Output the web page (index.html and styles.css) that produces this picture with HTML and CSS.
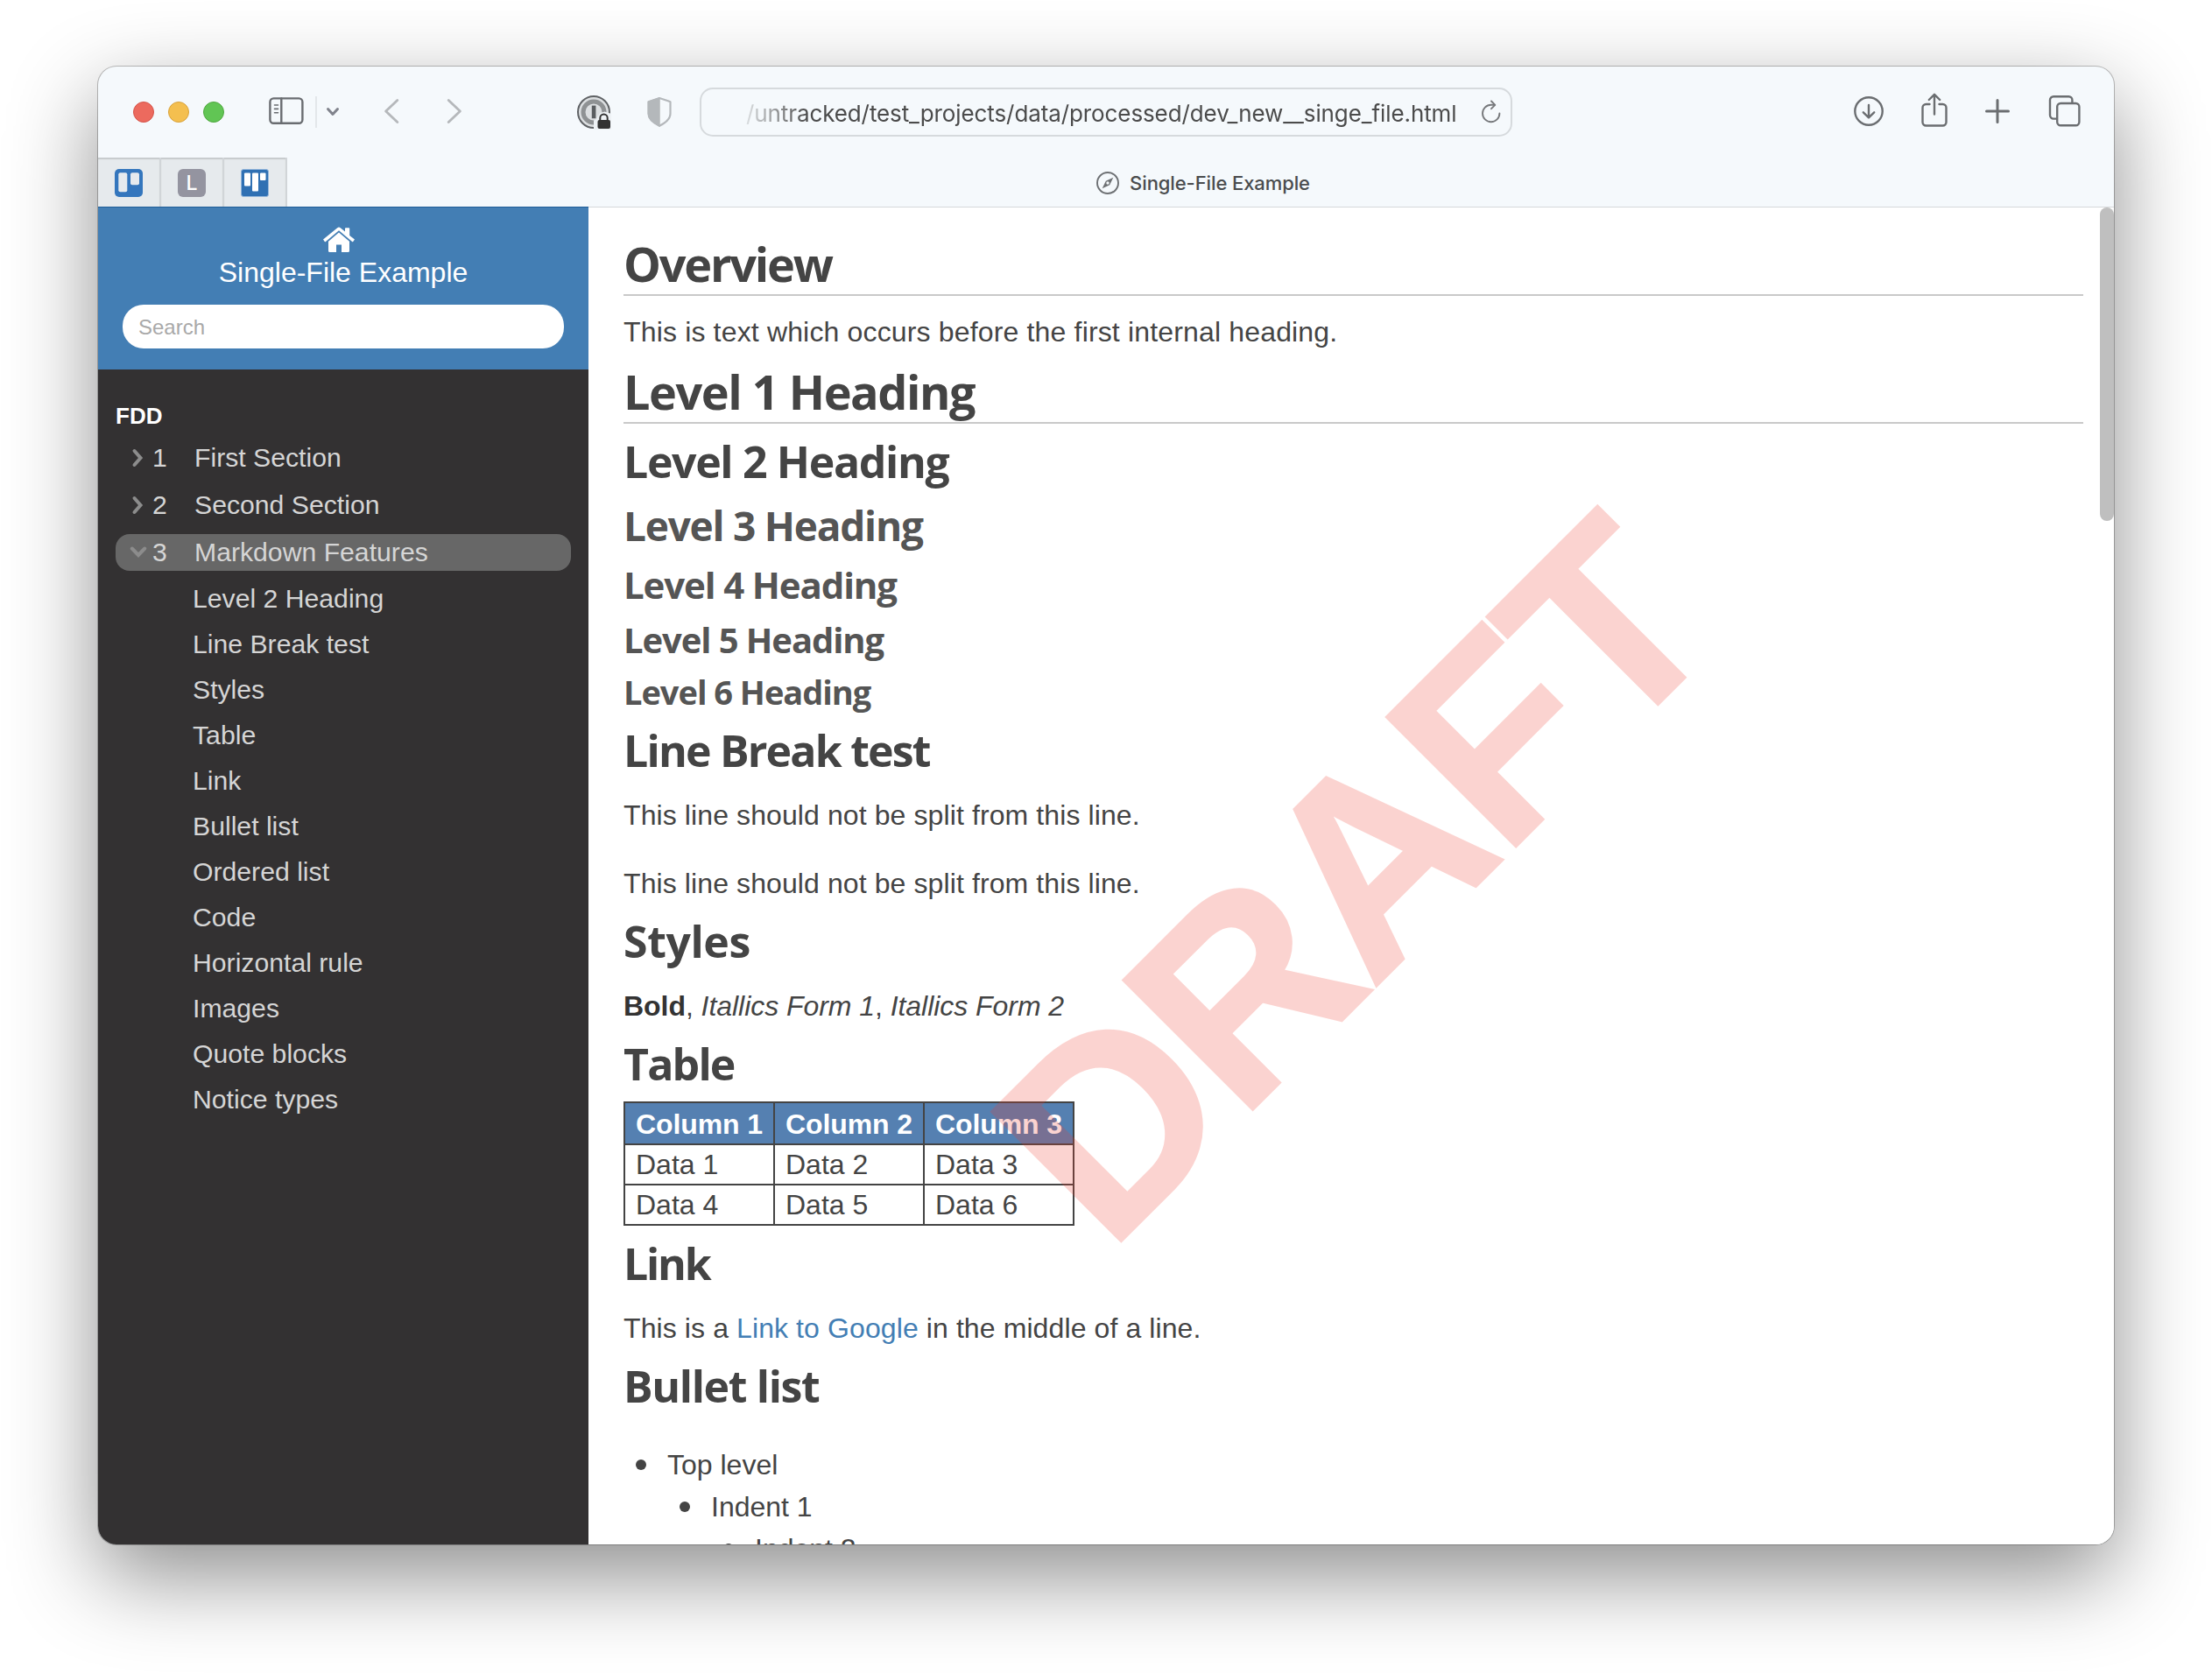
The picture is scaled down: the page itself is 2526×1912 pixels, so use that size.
FILE: index.html
```html
<!DOCTYPE html>
<html lang="en">
<head>
<meta charset="utf-8">
<title>Single-File Example</title>
<link rel="stylesheet" href="styles.css">
</head>
<body>
<div class="window">
  <header class="toolbar">
    <div class="lights"><span class="light red"></span><span class="light yellow"></span><span class="light green"></span></div>
    <svg class="i-sidebar" width="40" height="32" viewBox="0 0 40 32" fill="none" stroke="#696c70" stroke-width="2.4" stroke-linecap="round"><rect x="1.4" y="1.4" width="37" height="28.4" rx="4"/><path d="M14.3 1.5v28"/><path d="M6.5 9h4M6.5 13.4h4M6.5 17.8h4" stroke-width="1.6"/></svg>
    <span class="divider"></span>
    <svg class="i-chev" width="16" height="12" viewBox="0 0 16 12" fill="none" stroke="#80838c" stroke-width="3" stroke-linecap="round" stroke-linejoin="round"><path d="M2.5 2.5L8 8.5L13.5 2.5"/></svg>
    <svg class="i-back" width="18" height="30" viewBox="0 0 18 30" fill="none" stroke="#b5b8bb" stroke-width="2.8" stroke-linecap="round" stroke-linejoin="round"><path d="M15.8 2.4L2.6 15L15.8 27.6"/></svg>
    <svg class="i-fwd" width="18" height="30" viewBox="0 0 18 30" fill="none" stroke="#b5b8bb" stroke-width="2.8" stroke-linecap="round" stroke-linejoin="round"><path d="M2.2 2.4L15.4 15L2.2 27.6"/></svg>
    <svg class="i-pass" width="40" height="40" viewBox="0 0 40 40"><circle cx="20" cy="20" r="18" fill="#dcdfe1" stroke="#5f6265" stroke-width="2"/><circle cx="20" cy="20" r="12" fill="#dcdfe1" stroke="#8f9294" stroke-width="5"/><rect x="17.8" y="12.6" width="4.6" height="14.6" fill="#5a5d60"/><path d="M20 40V29.500q4-1 4.500-4.500l3-4 5-1.500L40 22v18z" fill="#eef2f5"/><path d="M27.3 30v-3.2a4.2 4.2 0 0 1 8.4 0V30" fill="none" stroke="#333" stroke-width="2"/><rect x="24.5" y="29" width="14.5" height="10" rx="2" fill="#333"/></svg>
    <svg class="i-shield" width="30" height="36" viewBox="0 0 30 36"><path d="M15 2L27.5 6.2V20c0 6-6 10.5-12.5 13.8C8.500 30.500 2.500 26 2.500 20V6.200z" fill="none" stroke="#b4b8bb" stroke-width="2.2" stroke-linejoin="round"/><path d="M15 2L2.500 6.200V20c0 6 6 10.500 12.500 13.800z" fill="#b4b8bb" stroke="#b4b8bb" stroke-width="1.500"/></svg>
    <div class="address">
      <span class="url">/untracked/test_projects/data/processed/dev_new__singe_file.html</span>
      <svg class="i-reload" width="24" height="28" viewBox="0 0 24 28" fill="none" stroke="#77797c" stroke-width="1.900" stroke-linecap="round" stroke-linejoin="round"><path d="M21.400 15.500a9.700 9.700 0 1 1-9.700-9.700h4"/><path d="M12 1.500l4.300 4.300L12 10.200"/></svg>
    </div>
    <div class="actions">
      <svg width="36" height="36" viewBox="0 0 36 36" fill="none" stroke="#6b6e71" stroke-width="2.400" stroke-linecap="round" stroke-linejoin="round"><circle cx="18" cy="18" r="15.700"/><path d="M18 11v14M11.800 19.300L18 25.300L24.200 19.300"/></svg>
      <svg width="32" height="40" viewBox="0 0 32 40" fill="none" stroke="#6b6e71" stroke-width="2.400" stroke-linecap="round" stroke-linejoin="round"><path d="M10.500 14H6.500a4 4 0 0 0-4 4v16.500a4 4 0 0 0 4 4h19a4 4 0 0 0 4-4V18a4 4 0 0 0-4-4H21.500"/><path d="M16 25.500V3M9.800 9L16 2.800L22.200 9"/></svg>
      <svg width="30" height="30" viewBox="0 0 30 30" fill="none" stroke="#6b6e71" stroke-width="3" stroke-linecap="round"><path d="M15 2.500v25M2.500 15h25"/></svg>
      <svg width="38" height="38" viewBox="0 0 38 38" fill="none" stroke="#6b6e71" stroke-width="2.400"><path d="M9.800 27.600H6a4 4 0 0 1-4-4V6.200a4 4 0 0 1 4-4h17.400a4 4 0 0 1 4 4v3.600"/><rect x="10.200" y="10" width="25.200" height="25.200" rx="4"/></svg>
    </div>
  </header>
  <nav class="tabs">
    <div class="pin"><svg width="32" height="32" viewBox="0 0 32 32"><rect width="32" height="32" rx="5" fill="#3476bd"/><rect x="4.300" y="4.300" width="10" height="22" rx="2" fill="#e6eaee"/><rect x="18" y="4.300" width="10" height="14" rx="2" fill="#e6eaee"/></svg></div>
    <div class="pin"><span class="letter">L</span></div>
    <div class="pin"><svg width="32" height="32" viewBox="0 0 32 32"><rect x=".5" y=".5" width="31" height="31" rx="2.500" fill="#2f70b3" stroke="#94b6db"/><rect x="4" y="4.500" width="7" height="15" rx="1" fill="#fff"/><rect x="13" y="4.500" width="7" height="21" rx="1" fill="#fff"/><rect x="22" y="4.500" width="6.500" height="8.500" rx="1" fill="#fff"/></svg></div>
    <div class="active-tab">
      <svg width="28" height="28" viewBox="0 0 28 28"><circle cx="14" cy="14" r="12" fill="none" stroke="#6d7073" stroke-width="1.900"/><path d="M20.300 7.700L16.200 16.200L7.700 20.300L11.800 11.800z" fill="#6d7073"/><circle cx="14" cy="14" r="1.700" fill="#f5f9fc"/></svg>
      <span>Single-File Example</span>
    </div>
  </nav>
  <div class="page">
    <aside class="sidebar">
      <div class="brand">
        <svg class="home" width="36" height="30" viewBox="0 0 36 30" fill="#fff"><path d="M6 16.800L18 6.600L30 16.800V27.500a1.500 1.500 0 0 1-1.500 1.500H21v-8.500h-6V29H7.500A1.500 1.500 0 0 1 6 27.500z"/><path d="M0 14.600L16.300 1.200q1.700-1.300 3.400 0L25 5.600V2q0-.8.800-.8h3.600q.8 0 .8.800v7.900l5.800 4.700-1.800 2.300q-.5.500-1.100 0L18 4.300 2.900 16.900q-.6.500-1.100 0z"/></svg>
        <div class="brand-name">Single-File Example</div>
        <div class="search">Search</div>
      </div>
      <div class="menu">
        <div class="group">FDD</div>
        <div class="item"><svg width="16" height="24" viewBox="0 0 16 24"><path d="M4.500 4L11.500 12L4.500 20"/></svg><span class="num">1</span>First Section</div>
        <div class="item"><svg width="16" height="24" viewBox="0 0 16 24"><path d="M4.500 4L11.500 12L4.500 20"/></svg><span class="num">2</span>Second Section</div>
        <div class="item current"><svg width="20" height="16" viewBox="0 0 20 16"><path d="M2.800 3.500L10 11L17.200 3.500"/></svg><span class="num">3</span>Markdown Features</div>
        <ul class="sub">
          <li>Level 2 Heading</li><li>Line Break test</li><li>Styles</li><li>Table</li><li>Link</li><li>Bullet list</li><li>Ordered list</li><li>Code</li><li>Horizontal rule</li><li>Images</li><li>Quote blocks</li><li>Notice types</li>
        </ul>
      </div>
    </aside>
    <main class="content">
      <h1 class="tightest">Overview</h1>
      <p class="lead">This is text which occurs before the first internal heading.</p>
      <h1>Level 1 Heading</h1>
      <h2 class="first">Level 2 Heading</h2>
      <h3>Level 3 Heading</h3>
      <h4>Level 4 Heading</h4>
      <h5>Level 5 Heading</h5>
      <h6>Level 6 Heading</h6>
      <h2 class="after-h6 tight">Line Break test</h2>
      <p>This line should not be split from this line.</p>
      <p class="next">This line should not be split from this line.</p>
      <h2 class="loose">Styles</h2>
      <p class="styled"><strong>Bold</strong>, <em>Itallics Form 1</em>, <em>Itallics Form 2</em></p>
      <h2 class="table-title tight">Table</h2>
      <table>
        <tr><th>Column 1</th><th>Column 2</th><th>Column 3</th></tr>
        <tr><td>Data 1</td><td>Data 2</td><td>Data 3</td></tr>
        <tr><td>Data 4</td><td>Data 5</td><td>Data 6</td></tr>
      </table>
      <h2 class="link-title tightest">Link</h2>
      <p>This is a <a>Link to Google</a> in the middle of a line.</p>
      <h2>Bullet list</h2>
      <ul class="bullets"><li>Top level<ul><li>Indent 1<ul><li>Indent 2</li></ul></li></ul></li></ul>
      <div class="watermark"><span>DRAFT</span></div>
      <div class="scrollbar"></div>
    </main>
  </div>
</div>
</body>
</html>
```
FILE: styles.css
```css
* { box-sizing: border-box; }
html, body { height: 100%; }
body {
  margin: 0;
  padding: 76px 112px 148px;
  background: #fff;
  font: 32px/48px "Liberation Sans", Arial, sans-serif;
  color: #444;
  overflow: hidden;
}
svg { display: block; flex: none; }
.window {
  height: 1688px;
  border-radius: 21px;
  overflow: hidden;
  background: #f5f9fc;
  display: flex;
  flex-direction: column;
  box-shadow: 0 0 0 1px rgba(0,0,0,.24), 0 36px 100px rgba(0,0,0,.45);
}

/* toolbar */
.toolbar { height: 104px; flex: none; display: flex; align-items: center; padding-left: 40px; }
.lights { display: flex; gap: 16px; }
.light { width: 24px; height: 24px; border-radius: 50%; border: 1px solid; }
.red { background: #ec6a5e; border-color: #d5544a; }
.yellow { background: #f4bf4f; border-color: #d8a23c; }
.green { background: #61c554; border-color: #4fa73f; }
.i-sidebar { margin: -2px 0 0 51px; }
.divider { width: 2px; height: 36px; background: #e3e7ea; margin-left: 13px; }
.i-chev { margin: 0 0 0 10px; }
.i-back { margin: -2px 0 0 50px; }
.i-fwd { margin: -2px 0 0 54px; }
.i-pass { margin-left: 130px; }
.i-shield { margin-left: 40px; }
.address {
  width: 928px;
  height: 56px;
  margin-left: 31px;
  border: 2px solid #d6dadd;
  border-radius: 15px;
  display: flex;
  align-items: center;
  padding-left: 51px;
}
.url {
  width: 839px;
  font: 26px/40px Inter, sans-serif;
  letter-spacing: -.1px;
  color: #4b4b4b;
  padding-top: 3px;
  white-space: nowrap;
  -webkit-mask-image: linear-gradient(90deg, rgba(0,0,0,.15), #000 70px);
  mask-image: linear-gradient(90deg, rgba(0,0,0,.15), #000 70px);
}
.actions { display: flex; align-items: center; margin: -2px 0 0 389px; }
.actions svg:nth-child(2) { margin: -4px 0 0 41px; }
.actions svg:nth-child(3) { margin-left: 41px; }
.actions svg:nth-child(4) { margin-left: 43px; }

/* tabs */
.tabs { height: 56px; flex: none; display: flex; }
.pin {
  width: 72px;
  background: #e6eaed;
  border-right: 2px solid #d1d5d8;
  box-shadow: inset 0 2px 1px #c6cacc;
  display: flex;
  align-items: center;
  justify-content: center;
  padding-top: 2px;
}
.letter {
  width: 32px; height: 32px; border-radius: 6px;
  background: #9494a0; color: #fff;
  font: 500 23px/32px Inter, sans-serif; text-align: center;
}
.active-tab {
  flex: 1;
  display: flex;
  align-items: center;
  justify-content: center;
  gap: 11px;
  padding: 2px 0 0 5px;
  font: 500 22px/30px Inter, sans-serif;
  letter-spacing: -.1px;
  color: #4a4c4e;
}

/* page */
.page { flex: 1; min-height: 0; display: flex; }
.sidebar { width: 560px; flex: none; background: #333132; color: #d5d5d5; }
.brand {
  height: 186px;
  background: #437eb4;
  border-top: 1px solid #1f5d98;
  color: #fff;
  display: flex;
  flex-direction: column;
  align-items: center;
}
.home { margin: 22px 10px 0 0; }
.brand-name { line-height: 40px; margin-top: 2px; }
.search {
  width: 504px; height: 50px;
  margin-top: 17px;
  padding-left: 18px;
  border-radius: 24px;
  background: #fff; color: #a9a9a9;
  font-size: 24px; line-height: 51px;
}
.menu { padding: 31px 20px 0; font-size: 30.2px; }
.group { font-weight: bold; font-size: 26px; line-height: 44px; color: #fff; }
.item {
  height: 42px; margin: 5px 0 12px;
  display: flex; align-items: center;
  border-radius: 16px;
  line-height: 42px;
}
.item + .item { margin-top: 0; }
.item svg { margin-left: 17px; fill: none; stroke: #8c8c8c; stroke-width: 4; stroke-linecap: round; }
.num { width: 48px; margin-left: 9px; }
.item.current { background: #676767; margin-bottom: 6px; }
.current svg { margin-left: 16px; }
.current .num { margin-left: 6px; }
.sub { list-style: none; margin: 0; padding: 0 0 0 88px; line-height: 52px; }

.content { flex: 1; position: relative; overflow: hidden; padding: 29px 35px 0 40px; border-top: 1px solid #d5d8da; background: #fff; }
h1, h2, h3, h4, h5, h6 { margin: 0; font-family: "Open Sans", sans-serif; font-weight: 700; letter-spacing: -.027em; color: #444; }
h1 { font-size: 54px; line-height: 70px; border-bottom: 2px solid #c9c9c9; }
h2 { font-size: 50px; line-height: 60px; margin-top: 12px; }
h3, h4, h5, h6 { color: #555; }
h3 { font-size: 46px; line-height: 56px; margin-top: 15px; }
h4 { font-size: 42px; line-height: 50px; margin-top: 15px; }
h5 { font-size: 40px; line-height: 48px; margin-top: 14px; }
h6 { font-size: 38px; line-height: 46px; margin-top: 12px; }
.tight { letter-spacing: -1.8px; }
.tightest { letter-spacing: -2.2px; }
.loose { letter-spacing: -.4px; }
p { margin: 20px 0 0; letter-spacing: .1px; }
.lead { margin: 17px 0 9px; letter-spacing: .16px; }
.styled { letter-spacing: -.05px; }
.next { margin-top: 30px; }
h2.first { margin-top: 13px; }
h2.after-h6 { margin-top: 14px; }
h2.table-title { margin-top: 12px; }
h2.link-title { margin-top: 13px; }
strong { color: #333; }
a { color: #437eb4; }
table { border-collapse: collapse; margin-top: 13px; width: 515px; table-layout: fixed; line-height: 43px; }
th, td { border: 2px solid #444; padding: 1px 0 0 12px; text-align: left; }
th { background: #5580b1; color: #fff; line-height: 44px; padding-top: 2px; letter-spacing: -.1px; }
.bullets { margin: 36px 0 0; list-style: none; }
.bullets, .bullets ul { padding-left: 50px; }
.bullets ul { margin: 0; list-style: none; }
.bullets li::before {
  content: "";
  display: inline-block;
  width: 12px; height: 12px;
  margin: 0 24px 5px -36px;
  border-radius: 50%;
  background: #444;
}

.watermark {
  position: absolute; inset: 0;
  display: flex; align-items: center; justify-content: center;
  padding: 10px 0 0 2px;
  pointer-events: none;
}
.watermark span {
  font-weight: bold; font-size: 304px; line-height: 1;
  letter-spacing: -7px;
  color: rgb(240,60,45);
  -webkit-text-stroke: 3px rgb(240,60,45);
  opacity: .22;
  transform: rotate(-45deg);
}
.scrollbar { position: absolute; top: 0; right: 0; width: 16px; height: 358px; border-radius: 8px; background: #bfbfbf; }
```
